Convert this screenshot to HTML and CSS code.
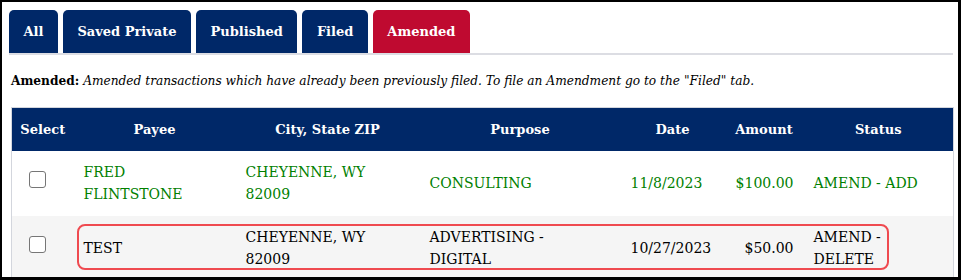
FILE: index.html
```html
<!DOCTYPE html>
<html lang="en">
<head>
    <meta charset="UTF-8">
    <meta name="viewport" content="width=device-width, initial-scale=1.0">
    <title>Transactions - Amended</title>
    <link rel="stylesheet" href="styles.css">
</head>
<body>
    <div class="frame">
        <div class="tabs">
            <button class="tab">All</button>
            <button class="tab">Saved Private</button>
            <button class="tab">Published</button>
            <button class="tab">Filed</button>
            <button class="tab active">Amended</button>
        </div>

        <p class="note"><b>Amended:</b> <i>Amended transactions which have already been previously filed. To file an Amendment go to the "Filed" tab.</i></p>

        <div class="table-wrap">
            <table class="transactions">
                <colgroup>
                    <col class="c-select">
                    <col class="c-payee">
                    <col class="c-city">
                    <col class="c-purpose">
                    <col class="c-date">
                    <col class="c-amount">
                    <col class="c-status">
                </colgroup>
                <thead>
                    <tr>
                        <th>Select</th>
                        <th>Payee</th>
                        <th>City, State ZIP</th>
                        <th>Purpose</th>
                        <th>Date</th>
                        <th>Amount</th>
                        <th>Status</th>
                    </tr>
                </thead>
                <tbody>
                    <tr class="added">
                        <td class="select"><input type="checkbox"></td>
                        <td class="payee">FRED FLINTSTONE</td>
                        <td class="city">CHEYENNE, WY 82009</td>
                        <td class="purpose">CONSULTING</td>
                        <td>11/8/2023</td>
                        <td class="amount">$100.00</td>
                        <td class="status">AMEND - ADD</td>
                    </tr>
                    <tr class="deleted">
                        <td class="select"><input type="checkbox"></td>
                        <td class="payee">TEST</td>
                        <td class="city">CHEYENNE, WY 82009</td>
                        <td class="purpose">ADVERTISING - DIGITAL</td>
                        <td>10/27/2023</td>
                        <td class="amount">$50.00</td>
                        <td class="status">AMEND - DELETE</td>
                    </tr>
                </tbody>
            </table>
            <!-- annotation box around the deleted row -->
            <div class="highlight"></div>
        </div>
    </div>
</body>
</html>
```

FILE: styles.css
```css
* {
    box-sizing: border-box;
}
body {
    margin: 0;
    font-family: "DejaVu Serif", Georgia, serif;
    background: white;
}
.frame {
    width: 961px;
    height: 280px;
    overflow: hidden;
    border: solid #000;
    border-width: 2px 3px 3px 2px;
    padding: 8px 5px 0 7px;
}
.tabs {
    display: flex;
    gap: 5px;
    border-bottom: 2px solid #dcdde3;
}
.tab {
    height: 43px;
    padding: 0 14.5px;
    border: none;
    border-radius: 5px 5px 0 0;
    background: #002868;
    color: white;
    font-family: inherit;
    font-size: 13px;
    font-weight: bold;
    cursor: pointer;
}
.tab.active {
    background: #bf0a30;
}
.note {
    margin: 16px 0 0 2px;
    height: 20px;
    font-size: 12.2px;
    line-height: 20px;
    color: #000;
}
.table-wrap {
    position: relative;
    margin: 16px 0 0 2px;
}
.transactions {
    width: 943px;
    table-layout: fixed;
    border-collapse: collapse;
    border: 1px solid #d3d6dd;
    font-size: 14px;
}
.c-select { width: 62px; }
.c-payee { width: 162px; }
.c-city { width: 184px; }
.c-purpose { width: 201px; }
.c-date { width: 104px; }
.c-amount { width: 79px; }
.c-status { width: 150px; }
.transactions th {
    height: 43px;
    background: #002868;
    color: white;
    font-size: 13px;
    font-weight: bold;
    text-align: center;
    padding: 0 4px;
}
.transactions td {
    height: 65px;
    padding: 10px;
    line-height: 22px;
    text-align: left;
}
.transactions td.city {
    padding-right: 40px;
}
.transactions td.purpose,
.transactions td.status {
    padding-right: 25px;
}
.transactions td.amount {
    text-align: right;
}
.transactions td.select {
    vertical-align: top;
    padding: 20px 0 0 17px;
}
.transactions input[type="checkbox"] {
    appearance: none;
    display: block;
    width: 17px;
    height: 17px;
    margin: 0;
    border: 1px solid #767676;
    border-radius: 3px;
    background: white;
}
.added {
    background: white;
    color: #008000;
}
.deleted {
    background: #f5f5f5;
    color: #000;
}
.highlight {
    position: absolute;
    left: 66px;
    top: 117px;
    width: 812px;
    height: 46px;
    border: 2px solid #ef4a50;
    border-radius: 8px;
    pointer-events: none;
}
```
